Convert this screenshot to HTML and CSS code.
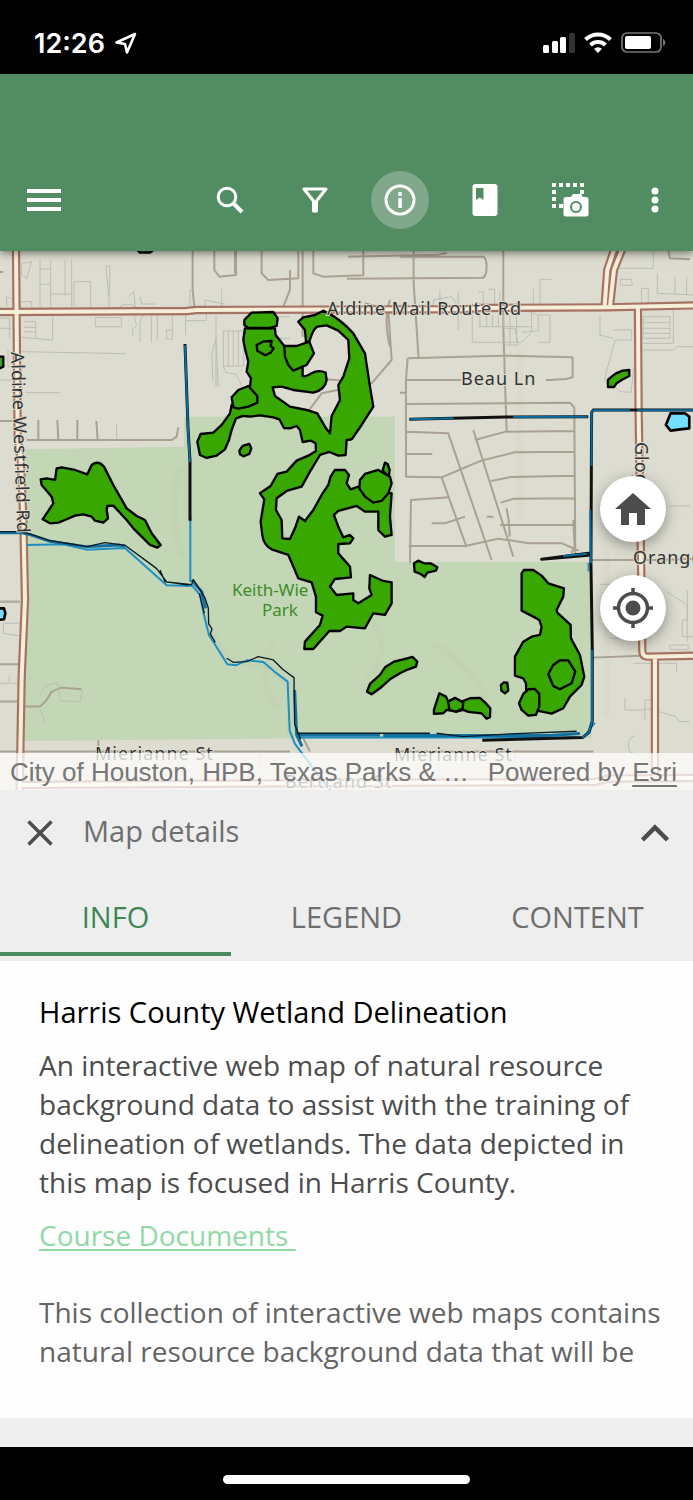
FILE: index.html
```html
<!DOCTYPE html>
<html lang="en">
<head>
    <meta charset="UTF-8">
    <meta name="viewport" content="width=device-width, initial-scale=1.0">
    <title>Harris County Wetland Delineation</title>
    <link rel="stylesheet" href="styles.css">
</head>
<body>
    <div class="status-bar">
        <div class="status-time">
            <span>12:26</span>
            <svg width="22" height="22" viewBox="0 0 22 22"><path d="M20 2 1.500 10.500 10 12 12 20.500Z" fill="none" stroke="#fff" stroke-width="2.600" stroke-linejoin="round"/></svg>
        </div>
        <div class="status-icons">
            <svg width="32" height="22" viewBox="0 0 32 22" fill="#fff">
                <rect x="0" y="13" width="6" height="8" rx="1.500"/>
                <rect x="9" y="9" width="6" height="12" rx="1.500"/>
                <rect x="17" y="5" width="6" height="16" rx="1.500"/>
                <rect x="26" y="1" width="6" height="20" rx="1.500" fill="#333"/>
            </svg>
            <svg width="28" height="22" viewBox="0 0 28 22" fill="none" stroke="#fff" stroke-width="4">
                <path d="M1.500 7.500a18 18 0 0 1 25 0"/>
                <path d="M6.500 13a11 11 0 0 1 15 0"/>
                <path d="M14 21l-4-4.300a6 6 0 0 1 8 0z" fill="#fff" stroke="none"/>
            </svg>
            <svg width="45" height="22" viewBox="0 0 45 22">
                <rect x="1" y="1" width="39" height="19" rx="5" fill="none" stroke="#777" stroke-width="1.700"/>
                <rect x="4" y="4" width="26" height="13" rx="2" fill="#fff"/>
                <path d="M42 7c3 1 3 6 0 7z" fill="#777"/>
            </svg>
        </div>
    </div>

    <div class="app-bar">
        <button class="icon-btn" aria-label="Menu">
            <svg width="34" height="24" viewBox="0 0 34 24" fill="#fff"><path d="M0 1h34v4H0zM0 10h34v4H0zM0 19h34v4H0z"/></svg>
        </button>
        <div class="tools">
            <button class="icon-btn" aria-label="Search">
                <svg width="28" height="28" viewBox="0 0 28 28" fill="none" stroke="#fff"><circle cx="11" cy="11" r="8.800" stroke-width="3"/><path d="M17 17l9 9" stroke-width="4"/></svg>
            </button>
            <button class="icon-btn" aria-label="Filter">
                <svg width="26" height="26" viewBox="0 0 26 26" fill="none" stroke="#fff" stroke-width="3" stroke-linejoin="round"><path d="M2 2h22L14.500 14v10h-3V14z"/><path d="M13 14v10" stroke-width="4"/></svg>
            </button>
            <button class="icon-btn active" aria-label="Map details">
                <svg width="32" height="32" viewBox="0 0 32 32"><circle cx="16" cy="16" r="14" fill="none" stroke="#fff" stroke-width="3"/><path d="M14.300 8h3.500v4h-3.500zM14.300 14h3.500v10h-3.500z" fill="#fff"/></svg>
            </button>
            <button class="icon-btn" aria-label="Bookmarks">
                <svg width="26" height="32" viewBox="0 0 26 32" fill="#fff" fill-rule="evenodd"><path d="M3.500 0h19a3 3 0 0 1 3 3v26a3 3 0 0 1-3 3h-19a3 3 0 0 1-3-3V3a3 3 0 0 1 3-3zM4 4v12l3.800-2.500L11.500 16V4z"/></svg>
            </button>
            <button class="icon-btn" aria-label="Screenshot">
                <svg width="38" height="36" viewBox="0 0 38 36" fill="#fff" fill-rule="evenodd">
                    <path d="M1 1h4v4H1zM8 1h4v4H8zM15 1h4v4h-4zM22 1h4v4h-4zM29 1h4v4h-4zM1 8h4v4H1zM1 15h4v4H1zM1 22h4v4H1zM8 22h4v4H8zM29 8h4v4h-4z"/>
                    <path d="M15 15h5l2-3h8l2 3h3a2.500 2.500 0 0 1 2.500 2.500V32a2.500 2.500 0 0 1-2.500 2.500H15a2.500 2.500 0 0 1-2.500-2.500V17.500A2.500 2.500 0 0 1 15 15zm10 4a6 6 0 1 0 0 12 6 6 0 0 0 0-12zm0 2a4 4 0 1 1 0 8 4 4 0 0 1 0-8z"/>
                </svg>
            </button>
            <button class="icon-btn" aria-label="More">
                <svg width="8" height="26" viewBox="0 0 8 26" fill="#fff"><circle cx="4" cy="4" r="3.500"/><circle cx="4" cy="13" r="3.500"/><circle cx="4" cy="22" r="3.500"/></svg>
            </button>
        </div>
    </div>

    <div class="map">
        <svg class="map-canvas" viewBox="0 1 693 539">
            <rect class="land" x="0" y="0" width="693" height="540"/>
            <g transform="scale(.3333)">
                <!-- park -->
                <path class="park" d="M75 598 552 590V500H1185V936H1775V1465L880 1465 75 1473Z"/>
                <path class="relief" d="M540 650q-40 150 10 270M820 1180q-60 100 20 200M1120 1120q60 80-20 160M1560 300v500M1300 1180q100 60 160 160M1820 900v500M600 1010l25 120 60 100 130 20 55 60v150l60 90"/>

                <!-- minor streets -->
                <path class="lot" d="M65 40l30-5-15 50-15-10zM120 30v140M152 30v140M120 57h32M120 103h32M152 132h62M195 30v110M215 30v140M222 95h50v75M222 95v75M318 48h12l-3 122M318 48l8 90M386 140l15-15 5 45M420 140l5 22h40M0 205h28v60M0 235h35M72 215h35v50M72 232h35M72 245h35M65 262l93 8V195M286 203h78v27h-78zM398 258v-20l12-10-10-40M420 275v-65l12-15M454 278V195M472 270V195M500 240h17v28h-17zM517 240V195M557 255v-60M557 212h62v-22M648 410V195M638 390l-2-80 12-45M655 410l-7-145M670 243h60v105h-60zM685 243v105M700 243v105M715 243v105M670 348l8 20 30 5 20 40M730 200h140M800 205v60h70M65 305l312 6M76 428h104M24 300v50h40M0 390h35M350 523v45M570 170v-50h10M615 170v-20l60 12M665 170v-55M20 170v-30l40 15h35v15M360 170q20-15 45 0"/>
                <path class="street" d="M578 0v120l5 50M643 0v60l15 20 50-5V0M705 0v70M785 0v70l20 20 90-5V0M870 60v60l-20 50M940 0v70l30 10 120-4V0M908 0v260M0 66h10M80 570h435l15-10 5-28M115 510v60M172 510l3 60M232 510v60M289 513l4 57M0 513h36M1045 20l270-6 25-5M880 400q160-30 200 20l20 30M1095 160l70 20 10 150-60 70-150 30-60 80M1170 150q-20 60 0 140"/>
                <path class="street" d="M1200 20h250q10 5 10 30t-10 33l-409 3M1241 0v100l15 225M1510 0v230l10 316M1223 325l285-8 210 5v60l-20 5-60 4M1223 325l-5 65h165M1218 390v290l8 0 100 2 58-25 60-25 100-25 178-2M1200 428h18M1220 462l490-4 13 15 3 440M1220 545l125 5 130 380M1420 540l120 380M1425 570l92-25 207-2M1220 612h77M1473 693l60-12 192-4M1502 758l40-12 183-1M1325 682l75 210M1230 940l3-190 115-8M1226 888h170l100-22 90 14h100l50 22M1530 860l-4-50-6-35M1720 810l4 80-10 20M1345 742v-5M1480 800h-20M1500 825h225M1295 820h40l60-20"/>
                <path class="lot" d="M1300 170v-20l55-10 20 30M1320 120v50M1375 125v115M1435 125h15v45M1466 118h18v52M1500 125v45M1575 180l40 15v47l-50 5M1615 195h35v82h-33M1417 195v82h148l30-30v-60M1435 230h160M1440 195v35M1460 195v35M1478 195v35M1495 195v35M1510 195v35M1530 195v35M1550 195v82M1515 235h30l10 50h-40M1530 235v50M1620 170V88h35M1600 170v-55M1840 240h55v30h-50l-32 120 50 35 30 2 10-80M1860 88h35l2 18h-35zM1840 55h120V0M1925 170v-55h20v55M1930 200h80v65h-80zM1930 218h80M1930 235h80M1930 250h80M1930 280h90V180M1930 300h90l10-10h60M1972 70v60l110 5M2025 80v55M2060 80v55M2000 1025l62 40v110M2062 1020v90h-15v50h50M1900 1240h60v40M1960 1240h70v25M2010 1185h55v14h-55zM1875 1345v35h60v30M1935 1350h22v28h-22zM1960 1380l68 20 10 15h30M1905 1457q-30 10-15 50l35 10M2010 768h60M1800 195v60l40 10M1800 1003h70M1830 1165h40"/>
                <path class="street" d="M1775 930h205l110-4M1775 1223l150-6M1200 1505h580M295 1470v40M0 1055h60M0 1243h60M0 1355h55M75 1370h45l20-20 15-25 30-12 60 5M0 1505h870M930 1505l-20-40M2005 0l5 25 60 3"/>
                <path class="lot" d="M0 1053h60M0 1300h55M28 1278v22M10 1120h50M10 1120v30l50 8M118 1340l15-30 40-12 8 55 60 2 5-30M118 1375l15 30v15M293 1510v80M535 1510v80M1315 1510v80M1545 1510v80M130 1505v-4M780 1505v60"/>

                <!-- main roads -->
                <g class="road road-case">
                    <path d="M48 0l5 560 10 80 7 170 5 240-10 230-6 340"/>
                    <path d="M0 186l560-3 30-3 620-2h180l50-4 380-2 270-6"/>
                    <path d="M1842 0l-20 60-8 110M1866 0l-24 60-12 110"/>
                    <path d="M1914 170l2 310 8 500 3 220q0 20 15 20l150-3M1965 1220v360"/>
                    <path d="M65 1605l1000-6 720-3 40-10 270-2"/>
                </g>
                <g class="road road-fill">
                    <path d="M48 0l5 560 10 80 7 170 5 240-10 230-6 340"/>
                    <path d="M0 186l560-3 30-3 620-2h180l50-4 380-2 270-6"/>
                    <path d="M1842 0l-20 60-8 110M1866 0l-24 60-12 110"/>
                    <path d="M1914 170l2 310 8 500 3 220q0 20 15 20l150-3M1965 1220v360"/>
                    <path d="M65 1605l1000-6 720-3 40-10 270-2"/>
                </g>

                <!-- streams and ditches -->
                <path class="stream" d="M80 885l110-2 70 16 115-5 125 112 75 2M571 800v195M575 1005l25 30 12 60 15 60 55 88 25 3 33-15 50 5 35 30 38 29 6 147 16 40 60 80 50 65M1766 938v26M890 1463h860l35-45"/>
                <path class="ditch" d="M555 282l9 250 6 100v180M1228 508l290-7 247-1M2080 480h-300l-5 8-2 450 4 260v215l-10 35-20 15-300 8M1625 928l140-18v6z"/>
                <path class="ditch-fill" d="M555 286l9 250 6 100M1230 508l130-3M1540 501l222-1M2080 481h-168M1890 481h-110l-5 7v160M1771 780l2 160M1776 1200v215l-10 35-20 13"/>
                <path class="ditch-fill" d="M1690 918l72-7"/>
                <path class="creek" d="M0 848h60l30 6 60 20 65 10 45 6 95-5 20 3M575 990l30 35 12 50M884 1320l6 135 16 34M890 1455h250M1150 1457h500l90-6"/>
                <path class="ditch thin" d="M0 845h60l30 7 60 20 65 10 45 8 55-12 40 5 20 3 75 55 20 15 30 40 75 8 5-15 20 30 15 25 10 30 1 48 10 15-5 15 15 25M598 1030l15 60M680 1225l20 12 40-2 35-15 45 10 28 28 34 25 2 140 18 45M480 960l15 35 70 10M890 1450h400M1310 1450l80 10 140-8 200-8"/>

                <!-- wetlands -->
                <g class="wetland">
                    <g transform="translate(540 120)">
                        <path d="M195 115 190 150 196 180 205 215 200 245 213 265 210 290 155 345 150 370 125 405 100 428 62 432 52 455 60 495 80 504 110 497 135 478 147 450 155 420 168 385 190 378 212 380 240 376 280 382 298 388 312 414 330 415 350 408 360 420 368 456 392 452 407 460 408 483 385 497 350 512 320 545 292 552 272 588 240 610 253 628 242 695 247 735 Q250 765 275 778 L325 795 338 825 355 865 395 877 408 920V967L428 977 420 1005 375 1055 373 1077H400L448 1023H480L500 1010 555 1015 580 970 615 975 635 940V877L610 873 570 855 568 895 575 915 535 940 520 930V910L470 915 450 890 465 867 513 862 510 830 475 790V762L510 760 520 745 510 735 490 742 475 710 462 675 475 663 530 648 555 665H595V720L615 740 635 735 630 680 635 610 535 590 512 598 500 580 507 555 495 540H465L452 560 445 585 425 615 400 660 375 693 357 680 345 715 330 747 307 745 305 690 288 660 290 625 320 603 365 590 390 545 420 495 448 486 475 497 497 495 500 450 515 448 545 405 580 350 570 290 555 190 520 130Q480 85 430 62L405 75 370 82 355 95 375 120 378 155 388 155Q400 115 412 110L440 106 475 122 505 150 508 205 490 260 475 285 480 330 455 378 450 430 438 415 412 370 380 360 330 350 285 318 278 292 305 290 340 300 400 308Q435 300 440 270L437 248Q415 238 395 250T368 258V235L313 168 287 135 285 115Z"/>
                        <path d="M215 68 280 66 293 85 290 108 270 114H205L193 105V90Z"/>
                        <path d="M230 165 252 154 275 153 272 168 281 175 272 188 256 196 232 182Z"/>
                        <path d="M313 168 350 168 388 155 402 190 380 225 340 242 325 225 315 200Z"/>
                        <path d="M155 322 175 300 205 288 232 318 232 338 205 350 175 356 160 352Z"/>
                        <path d="M178 482 188 468 208 462 214 475 208 492 190 499 180 493Z"/>
                    </g>
                    <g transform="translate(690 600)">
                        <path d="M388 115 390 90 405 72 445 60 480 80 485 100 475 130 455 153 430 158 405 140Z"/>
                        <path d="M458 62 465 38 473 42 479 60 477 76 470 74Z"/>
                    </g>
                    <path d="M122 688 140 685 165 690 170 655 185 652 225 660 262 673 275 645Q295 630 312 650L340 705 380 775 410 798 435 810 455 850 482 885 472 893 450 885 425 860 400 835 380 810 340 767 322 768 320 780 324 805 310 818 285 812 275 800 250 793 225 797 195 810 175 818 150 820 128 808 160 760 155 740 125 705Z"/>
                    <path d="M-5 320 10 320V350L-5 357ZM412 0 460 0 450 8H420Z"/>
                    <path d="M1824 411V390L1835 380 1848 370 1868 362 1888 360V378L1865 390 1850 400 1842 411Z"/>
                    <g transform="translate(1200 810)">
                        <path d="M42 130 55 122 72 130 92 130 112 142 108 152 82 158 74 171 62 162 44 155Z"/>
                        <path d="M365 160 372 150H400L425 167 445 190 492 205 490 230 470 270 472 278 512 315 513 355 540 405 553 470 545 495 510 530 490 565 455 581 415 573 380 545 378 490 370 475 345 467V410L370 365 395 350 420 345 425 320 418 300 400 290 365 272Z"/>
                        <path d="M445 462 460 435 480 421H505L526 455 515 490 480 508 460 498Z"/>
                        <path d="M357 550 370 522 385 508 405 507 418 522V560L408 585 385 587 365 570Z"/>
                        <path d="M303 495 312 487 322 488 325 512 315 520 304 512Z"/>
                        <path d="M102 582V570L110 545 118 520 138 530 145 545 165 534 185 545 210 535 240 534 255 547 271 565 270 592 260 596 245 580 205 576 190 570 170 575 140 570 130 580Z"/>
                        <path d="M145 545 165 534 190 548 188 566 168 575 148 570Z"/>
                        <path d="M-99 515-90 492-60 465-45 442-18 425 10 418 38 411 52 425 48 440 25 448 0 460-30 478-60 505-85 523Z"/>
                    </g>
                </g>

                <!-- ponds -->
                <path class="pond" d="M2012 490H2055L2068 500V535L2040 538 2012 542 1998 525Z"/>
                <path class="pond" d="M-5 1075 12 1075 16 1090 12 1108-5 1110Z"/>
            </g>

            <text class="label" x="327" y="65">Aldine Mail Route Rd</text>
            <text class="label" x="461" y="135">Beau Ln</text>
            <text class="label" x="633" y="314">Orange</text>
            <text class="label" x="95" y="510">Mierianne St</text>
            <text class="label" x="394" y="511">Mierianne St</text>
            <text class="label" x="285" y="538">Bertrand St</text>
            <text class="label" transform="translate(11 102) rotate(88)">Aldine Westfield Rd</text>
            <text class="label" transform="translate(635 192) rotate(90)">Gloger St</text>
            <text class="label park-label" x="232" y="346">Keith-Wie</text>
            <text class="label park-label" x="262" y="366">Park</text>
        </svg>
        <div class="map-buttons">
            <button class="round-btn" aria-label="Home">
                <svg width="36" height="32" viewBox="0 0 36 32"><path d="M18 0 36 16H30V32H22V20H14V32H6V16H0Z" fill="#4c4c4c"/></svg>
            </button>
            <button class="round-btn" aria-label="Find my location">
                <svg width="40" height="40" viewBox="0 0 40 40" fill="none" stroke="#4c4c4c"><circle cx="20" cy="20" r="14.500" stroke-width="3.500"/><circle cx="20" cy="20" r="7.500" fill="#4c4c4c" stroke="none"/><path d="M20 0v6M20 34v6M0 20h6M34 20h6" stroke-width="3.500"/></svg>
            </button>
        </div>
        <div class="attribution">
            <span>City of Houston, HPB, Texas Parks &amp; …</span>
            <span>Powered by <a href="#">Esri</a></span>
        </div>
    </div>

    <div class="panel">
        <div class="panel-header">
            <button class="panel-btn" aria-label="Close">
                <svg width="26" height="26" viewBox="0 0 26 26" fill="none" stroke="#4c4c4c" stroke-width="3.500"><path d="M1.500 1.500l23 23M24.500 1.500l-23 23"/></svg>
            </button>
            <h2>Map details</h2>
            <button class="panel-btn" aria-label="Expand">
                <svg width="28" height="18" viewBox="0 0 28 18" fill="none" stroke="#4c4c4c" stroke-width="4.500"><path d="M1.500 16 14 3.500 26.500 16"/></svg>
            </button>
        </div>
        <div class="tabs">
            <button class="tab active">INFO</button>
            <button class="tab">LEGEND</button>
            <button class="tab">CONTENT</button>
        </div>
        <div class="info">
            <h1>Harris County Wetland Delineation</h1>
            <p>An interactive web map of natural resource background data to assist with the training of delineation of wetlands. The data depicted in this map is focused in Harris County.</p>
            <a class="docs-link" href="#">Course Documents&nbsp;</a>
            <p class="more">This collection of interactive web maps contains natural resource background data that will be</p>
        </div>
    </div>

    <div class="home-bar"><div class="home-indicator"></div></div>
</body>
</html>
```
FILE: styles.css
```css
* { box-sizing: border-box; }
body { margin: 0; background-color: #000; font-family: "Open Sans", "Noto Sans", sans-serif; }
button { border: 0; padding: 0; background: none; font-family: inherit; cursor: pointer; }
svg { display: block; }
h1, h2, p { margin: 0; font-weight: 400; }

.status-bar { display: flex; justify-content: space-between; align-items: center; height: 74px; padding: 12px 27px 0 34px; background-color: #000; color: #fff; }
.status-time { display: flex; align-items: center; gap: 10px; font-family: Inter, sans-serif; font-size: 27px; font-weight: 600; }
.status-icons { display: flex; align-items: center; gap: 9px; }

.app-bar { position: relative; z-index: 1; display: flex; justify-content: space-between; align-items: flex-end; height: 177px; padding: 0 9px 22px 15px; background-color: #528c63; box-shadow: 0 2px 8px rgba(0, 0, 0, 0.5); }
.tools { display: flex; gap: 27px; }
.icon-btn { display: flex; align-items: center; justify-content: center; width: 58px; height: 58px; border-radius: 50%; }
.icon-btn.active { background-color: #7fa98a; }

.map { position: relative; overflow: hidden; }
.map-canvas { width: 100%; height: auto; }
.map-canvas path { stroke-linejoin: round; }
.land { fill: #dddcd0; }
.park { fill: #c3d6b5; }
.relief { fill: none; stroke: #8f9080; stroke-width: 20; opacity: 0.04; }
.lot { fill: none; stroke: #bdbdb7; stroke-width: 3; }
.street { fill: none; stroke: #a9a191; stroke-width: 6; }
.road { fill: none; }
.road-case { stroke: #a77263; stroke-width: 25; }
.road-fill { stroke: #f5efd9; stroke-width: 12; }
.stream { fill: none; stroke: #1d8fc4; stroke-width: 6; }
.creek { fill: none; stroke: #11719f; stroke-width: 9; }
.ditch { fill: none; stroke: #111; stroke-width: 9; }
.ditch.thin { stroke: #0b1c26; stroke-width: 4; }
.ditch-fill { fill: none; stroke: #0a6c9e; stroke-width: 6; }
.wetland { fill: #38a800; stroke: #000; stroke-width: 7; }
.pond { fill: #73dfff; stroke: #000; stroke-width: 8; }
.label { font-family: "Noto Sans", sans-serif; font-size: 18px; letter-spacing: 1px; fill: #333; stroke: #dddcd0; stroke-width: 2px; paint-order: stroke; }
.park-label { font-size: 17px; letter-spacing: 0; fill: #3c8c28; stroke: none; }

.map-buttons { position: absolute; right: 27px; bottom: 149px; display: flex; flex-direction: column; gap: 33px; }
.round-btn { display: flex; align-items: center; justify-content: center; width: 66px; height: 66px; border-radius: 50%; background-color: #fff; box-shadow: 0 4px 14px rgba(0, 0, 0, 0.35); }
.attribution { position: absolute; left: 0; right: 0; bottom: 0; display: flex; justify-content: space-between; padding: 2px 16px 0 10px; background-color: rgba(255, 255, 255, 0.75); color: #777; font-family: "Liberation Sans", Arial, sans-serif; font-size: 26px; line-height: 35px; white-space: nowrap; }
.attribution a { color: inherit; text-underline-offset: 4px; text-decoration-thickness: 2px; }

.panel { background-color: #eee; padding-bottom: 29px; }
.panel-header { display: flex; align-items: center; gap: 15px; height: 85px; padding: 0 10px 0 12px; }
.panel-header h2 { flex: 1; padding-bottom: 4px; color: #6e6e6e; font-size: 29px; }
.panel-btn { display: flex; align-items: center; justify-content: center; width: 56px; height: 56px; }
.tabs { display: flex; height: 86px; padding-bottom: 5px; }
.tab { flex: 1; padding-top: 6px; color: #6e6e6e; font-size: 29px; border-bottom: 4px solid transparent; }
.tab.active { color: #3f8657; border-bottom-color: #4a8a5f; }

.info { padding: 31px 28px 47px 39px; background-color: #fefefe; color: #4c4c4c; font-size: 28px; line-height: 39px; }
.info h1 { margin-bottom: 15px; color: #000; font-size: 29px; line-height: 39px; }
.docs-link { display: block; width: fit-content; margin: 14px 0 38px; color: #90d9a4; text-underline-offset: 3px; }
.more { color: #646464; }

.home-bar { display: flex; justify-content: center; height: 52px; padding-top: 28px; background-color: #000; }
.home-indicator { width: 247px; height: 9px; border-radius: 5px; background-color: #fff; }
```
